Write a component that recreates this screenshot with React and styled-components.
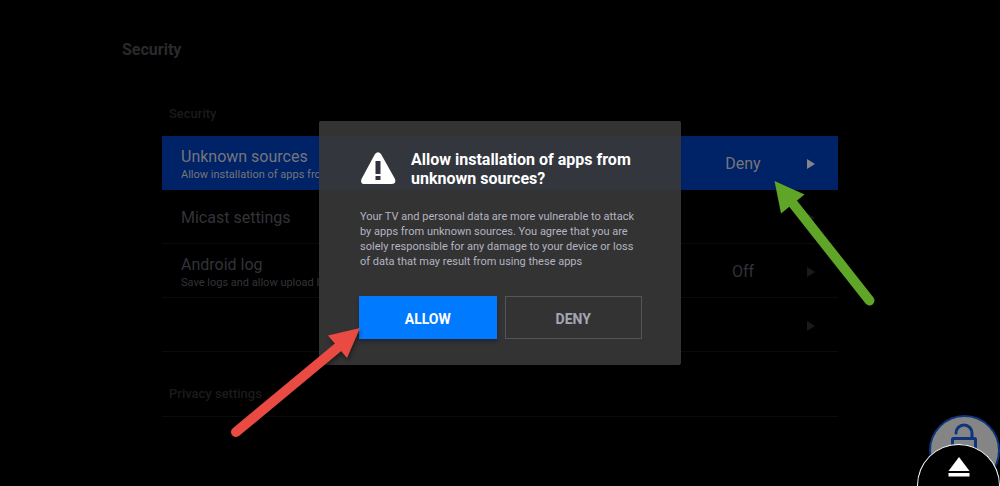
import React from "react";
import styled, { createGlobalStyle } from "styled-components";

const GlobalStyle = createGlobalStyle`
  * { box-sizing: border-box; }
  body { margin: 0; background: #000; font-family: Roboto, "Liberation Sans", sans-serif; }
  h1, h2, h3, p, ul { margin: 0; padding: 0; }
  button { font-family: inherit; cursor: pointer; }
`;

const Screen = styled.div`
  position: relative;
  min-height: 100vh;
  overflow: hidden;
  background: #000;
`;

const Settings = styled.main`
  max-width: 756px;
  margin: 0 auto;
  padding: 40px 0;
`;

const PageTitle = styled.h1`
  font-size: 16px;
  line-height: 20px;
  font-weight: 700;
  color: #2a2a2c;
`;

const Section = styled.section`
  padding: 0 40px;
  margin-top: ${(p) => p.$gap}px;
`;

const SectionTitle = styled.h2`
  padding: 0 7px 14px;
  font-size: 13px;
  line-height: 16px;
  font-weight: 500;
  color: #1b1b1d;
`;

const List = styled.ul`
  list-style: none;
`;

const Item = styled.li`
  border-bottom: 1px solid ${(p) => (p.$selected ? "#002266" : "#0b0b0b")};
`;

const RowButton = styled.button`
  display: flex;
  align-items: center;
  width: 100%;
  height: 53px;
  padding: 2px 23px 0 19px;
  border: 0;
  text-align: left;
  background: ${(p) => (p.$selected ? "#002266" : "#000")};
  color: ${(p) => (p.$selected ? "#76767c" : "#333338")};
`;

const RowText = styled.span`
  display: flex;
  flex-direction: column;
  flex: 1;
  min-width: 0;
  padding-top: ${(p) => (p.$hinted ? 3 : 0)}px;
`;

const RowLabel = styled.span`
  font-size: 16px;
  line-height: 20px;
`;

const RowHint = styled.span`
  width: 138px;
  overflow: hidden;
  white-space: nowrap;
  font-size: 11px;
  line-height: 16px;
`;

const RowValue = styled.span`
  width: 80px;
  margin-right: 24px;
  text-align: center;
  font-size: 16px;
  line-height: 20px;
`;

const Caret = styled.svg`
  width: 8px;
  height: 10px;
  fill: ${(p) => (p.$selected ? "#85858a" : "#1a1a1d")};
`;

const Layer = styled.div`
  position: absolute;
  inset: 0;
  display: grid;
  place-items: center;
`;

const Dialog = styled.div`
  position: relative;
  width: 362px;
  max-width: 100%;
  padding: 29px 39px 26px 40px;
  border-radius: 2px;
  background: rgba(57, 56, 57, 0.9);
`;

const DialogHead = styled.div`
  display: flex;
  align-items: center;
  gap: 14px;
`;

const WarningIcon = styled.svg`
  width: 38px;
  height: 34px;
  flex: none;
`;

const DialogTitle = styled.h2`
  font-size: 16px;
  line-height: 19px;
  font-weight: 700;
  color: #fff;
`;

const DialogText = styled.p`
  padding: 21px 0 27px 1px;
  font-size: 11px;
  line-height: 15px;
  color: #b4b4c0;
`;

const Actions = styled.div`
  display: flex;
  gap: 8px;
`;

const ActionButton = styled.button`
  flex: 1;
  height: 43px;
  padding: 2px 0 0;
  font-size: 14px;
  line-height: 16px;
  font-weight: 700;
  color: ${(p) => (p.$primary ? "#fff" : "#a5a6b4")};
  background: ${(p) => (p.$primary ? "#007aff" : "transparent")};
  border: 1px solid ${(p) => (p.$primary ? "#007aff" : "#54545e")};
  box-shadow: ${(p) => (p.$primary ? "0 3px 3px #262638" : "none")};
`;

const Pointer = styled.svg`
  position: absolute;
  left: ${(p) => p.$x}px;
  top: ${(p) => p.$y}px;
  pointer-events: none;
  filter: drop-shadow(1px 3px 2px rgba(0, 0, 0, 0.4));
`;

const LockButton = styled.button`
  position: absolute;
  right: 0;
  bottom: 0;
  display: flex;
  justify-content: center;
  align-items: flex-start;
  width: 71px;
  height: 71px;
  padding: 6px 0 0;
  border: 2px solid #0d347c;
  border-radius: 50%;
  background: #858585;
`;

const EjectButton = styled.button`
  position: absolute;
  right: 0;
  bottom: 0;
  display: flex;
  justify-content: center;
  align-items: flex-start;
  width: 83px;
  height: 42px;
  padding: 12px 0 0;
  border: 1px solid #fff;
  border-bottom: 0;
  border-radius: 42px 42px 0 0;
  background: #000;
`;

const rows = [
  { label: "Unknown sources", hint: "Allow installation of apps from", value: "Deny", selected: true },
  { label: "Micast settings" },
  { label: "Android log", hint: "Save logs and allow upload logs", value: "Off" },
  { name: "More security settings" },
];

function Row({ label, name, hint, value, selected }) {
  return (
    <Item $selected={selected}>
      <RowButton type="button" $selected={selected} aria-label={name}>
        <RowText $hinted={Boolean(hint)}>
          {label && <RowLabel>{label}</RowLabel>}
          {hint && <RowHint>{hint}</RowHint>}
        </RowText>
        {value && <RowValue>{value}</RowValue>}
        <Caret $selected={selected} viewBox="0 0 8 10" aria-hidden="true">
          <path d="M0 0 8 5 0 10Z" />
        </Caret>
      </RowButton>
    </Item>
  );
}

export default function App() {
  return (
    <>
      <GlobalStyle />
      <Screen>
        <Settings>
          <PageTitle>Security</PageTitle>
          <Section $gap={46}>
            <SectionTitle>Security</SectionTitle>
            <List>
              {rows.map((row) => (
                <Row key={row.label || row.name} {...row} />
              ))}
            </List>
          </Section>
          <Section $gap={34}>
            <SectionTitle>Privacy settings</SectionTitle>
            <List>
              <Item />
            </List>
          </Section>
        </Settings>

        <LockButton type="button" aria-label="Unlock">
          <svg width="30" height="42" viewBox="0 0 30 42" fill="none" stroke="#0d347c" strokeWidth="3" aria-hidden="true">
            <path d="M6 10A8 8 0 0 1 22 10V15" strokeLinecap="round" />
            <rect x="2.500" y="15.500" width="23" height="22" rx="1" />
            <circle cx="14" cy="24" r="1.500" />
          </svg>
        </LockButton>
        <EjectButton type="button" aria-label="Open drawer">
          <svg width="22" height="20" viewBox="0 0 22 20" fill="#fff" aria-hidden="true">
            <path d="M11 0 21.500 14H.5Z" />
            <rect x="0.500" y="16" width="21" height="3.500" />
          </svg>
        </EjectButton>

        <Layer>
          <Dialog role="dialog" aria-labelledby="dialog-title" aria-describedby="dialog-text">
            <DialogHead>
              <WarningIcon viewBox="0 0 38 34" aria-hidden="true">
                <path
                  d="M16 2Q19-1.500 22 2L36 27Q37.500 32 32.500 32H6Q.8 32 2.500 27Z"
                  fill="#fff"
                />
                <path d="M16.500 9h5v13h-5zM16.500 24h5v4h-5z" fill="#333140" />
              </WarningIcon>
              <DialogTitle id="dialog-title">
                Allow installation of apps from unknown sources?
              </DialogTitle>
            </DialogHead>
            <DialogText id="dialog-text">
              Your TV and personal data are more vulnerable to attack by apps from unknown
              sources. You agree that you are solely responsible for any damage to your device or
              loss of data that may result from using these apps
            </DialogText>
            <Actions>
              <ActionButton type="button" $primary>ALLOW</ActionButton>
              <ActionButton type="button">DENY</ActionButton>
            </Actions>
            <Pointer $x={-89} $y={199} width="140" height="124" viewBox="230 320 140 124" aria-hidden="true">
              <path d="M236 432 342 344" stroke="#e94b43" strokeWidth="10" strokeLinecap="round" />
              <path d="M360 328 328 335.500 347 358Z" fill="#e94b43" />
            </Pointer>
            <Pointer $x={446} $y={54} width="120" height="140" viewBox="765 175 120 140" aria-hidden="true">
              <path d="M869.500 300.500 791 201" stroke="#5fa528" strokeWidth="10" strokeLinecap="round" />
              <path d="M774.500 181 804.500 194.500 781 213.500Z" fill="#5fa528" />
            </Pointer>
          </Dialog>
        </Layer>
      </Screen>
    </>
  );
}
